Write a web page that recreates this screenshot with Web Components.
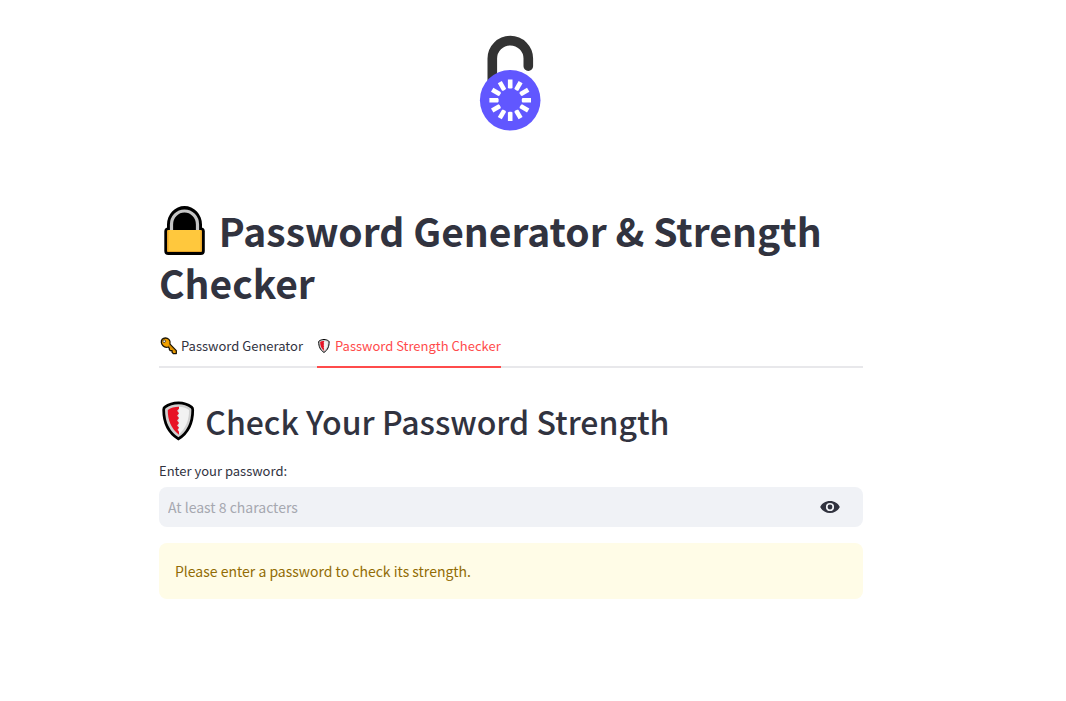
<!DOCTYPE html>
<html lang="en">
<head>
<meta charset="utf-8">
<meta name="viewport" content="width=device-width, initial-scale=1">
<title>Password Generator &amp; Strength Checker</title>
<style>
  body {
    margin: 0;
    background: #fff;
    color: #31333f;
    font-family: "Noto Sans CJK SC", "Noto Sans", sans-serif;
  }
</style>
</head>
<body>
<password-app></password-app>

<script>
const css = String.raw;
function define(name, style, markup, setup) {
  const template = document.createElement('template');
  template.innerHTML = `<style>*{box-sizing:border-box}${style}</style>${markup}`;
  customElements.define(name, class extends HTMLElement {
    constructor() {
      super();
      this.attachShadow({ mode: 'open' }).append(template.content.cloneNode(true));
    }
    connectedCallback() { if (setup) setup(this, this.shadowRoot); }
  });
}

define('logo-mark', css`
  :host { display: flex; justify-content: center; }
  svg { display: block; width: 64px; height: 96px; }
`, `
  <svg viewBox="0 0 64 96" role="img" aria-label="Open padlock">
    <path d="M14.3 50V23.600a18 18 0 0 1 36 0v7.600" fill="none" stroke="#333" stroke-width="9.6" stroke-linecap="round"/>
    <circle cx="32.2" cy="65.2" r="30.3" fill="#6157ff"/>
    <g id="ticks" fill="#fff" transform="translate(32.2 65.2)"></g>
  </svg>
`, (host, root) => {
  const ticks = root.getElementById('ticks');
  if (ticks.childElementCount) return;
  for (let i = 0; i < 12; i++) {
    const p = document.createElementNS('http://www.w3.org/2000/svg', 'path');
    p.setAttribute('d', 'M-2.3-20.8H2.3V-12.3L1.2-11.6H-1.2L-2.3-12.3Z');
    p.setAttribute('transform', `rotate(${i * 30})`);
    ticks.append(p);
  }
});

const iconBox = css`
  :host { display: inline-block; }
  svg { display: block; width: 100%; height: 100%; }
`;

define('icon-lock', iconBox, `
  <svg viewBox="0 -1 51 52" role="img" aria-label="Locked">
    <path d="M8 25V19.500a17.500 18.500 0 0 1 35 0V25Z" fill="#000"/>
    <rect x="5.300" y="22.500" width="40.500" height="27.500" rx="4" fill="#000"/>
    <path d="M12.500 27V19.500a13 13.500 0 0 1 26 0V27" fill="none" stroke="#c6c6c6" stroke-width="3.200"/>
    <rect x="8" y="25" width="35" height="22" rx="1" fill="#e8a52a"/>
    <rect x="9.500" y="25" width="32" height="21" fill="#ffc83d"/>
  </svg>
`);

define('icon-shield', iconBox, `
  <svg viewBox="0 0 40 42" role="img" aria-label="Shield">
    <path d="M20 2.400C15.500 2.400 10 3.800 6 6.800 5 7.600 4.800 8.300 4.800 9.500 4.800 22 9 32.500 19.900 39.400 31 32.500 34.600 22 34.600 9.500c0-1.200-.2-1.900-1.200-2.700C29.500 3.800 24.500 2.400 20 2.400Z" fill="#d0d0d0" stroke="#000" stroke-width="2.800"/>
    <path d="M20 6.500c4 0 7.500 1 10.800 3.200C31 19.500 27.500 29 20 35Z" fill="#f2f2f2"/>
    <path d="M20.500 6.500C16 6.500 12 7.500 9 9.700 8.800 19.500 12.500 29 20.500 35V32l-1.500-2 1.500-2-2-2.500 2-2.500-2-2.500 2-2.500-2-2.500 2-2.500-2-2.500 2-2Z" fill="#e81224"/>
  </svg>
`);

define('icon-key', iconBox, `
  <svg viewBox="-1 0 18 18" role="img" aria-label="Key">
    <path d="M2.200 2.300C3.800.5 7 .6 8.900 2.400c1.300 1.300 1.600 3 1.100 4.700l6.300 6.500v3h-3l-1.200-1.300v-1.600h-1.700l-1-1.100v-1.300L8.300 10c-1.900.6-4 .2-5.300-1.200C1.200 7 .7 4 2.200 2.300Z" fill="#f2a100" stroke="#1b1405" stroke-width="1.300" stroke-linejoin="round"/>
    <circle cx="4.200" cy="4.200" r="1.300" fill="#fff" stroke="#1b1405" stroke-width=".7"/>
    <path d="m8.500 8 6.800 6.800" stroke="#b87400" stroke-width=".8"/>
  </svg>
`);

define('icon-eye', iconBox, `
  <svg viewBox="0 0 20 14" aria-hidden="true">
    <path fill="currentColor" fill-rule="evenodd" d="M10 1C5.500 1 1.700 3.500.2 7c1.500 3.500 5.300 6 9.800 6s8.300-2.500 9.800-6C18.300 3.500 14.500 1 10 1Zm0 10.100a4.100 4.100 0 1 1 0-8.200 4.100 4.100 0 0 1 0 8.200Zm0-1.700a2.400 2.400 0 1 0 0-4.800 2.400 2.400 0 0 0 0 4.800Z"/>
  </svg>
`);

define('page-title', css`
  :host { display: block; }
  h1 { margin: 0; font-size: 39px; font-weight: 700; line-height: 52px; }
  icon-lock { width: 51px; height: 52px; vertical-align: top; }
`, `<h1><icon-lock></icon-lock> <slot></slot></h1>`);

define('section-heading', css`
  :host { display: block; }
  h2 { margin: 0; font-size: 32px; font-weight: 500; line-height: 42px; }
  icon-shield { width: 39px; height: 42px; vertical-align: top; }
`, `<h2><icon-shield></icon-shield> <slot></slot></h2>`);

define('tab-bar', css`
  :host { display: flex; gap: 14px; box-shadow: inset 0 -2px #e8e8eb; }
`, `<slot></slot>`, host => {
  host.setAttribute('role', 'tablist');
  host.addEventListener('click', e => {
    const tab = e.target.closest('tab-item');
    if (!tab) return;
    for (const t of host.children) t.toggleAttribute('selected', t === tab);
  });
});

define('tab-item', css`
  :host { display: block; }
  button {
    display: flex; align-items: center; gap: 4px;
    height: 42px; padding: 0; border: 0; border-bottom: 2px solid transparent;
    background: none; color: inherit;
    font-family: inherit; font-size: 13px; line-height: 20px; white-space: nowrap; cursor: pointer;
  }
  :host([selected]) button { color: #ff4b4b; border-color: #ff4b4b; }
  ::slotted([slot="icon"]) { height: 18px; width: var(--icon-width, 18px); }
`, `<button type="button" role="tab"><slot name="icon"></slot><span><slot></slot></span></button>`);

define('password-field', css`
  :host { display: block; }
  label { display: block; font-size: 13px; line-height: 20px; margin-bottom: 6px; }
  .box { display: flex; height: 40px; border-radius: 8px; background: #f0f2f6; overflow: hidden; }
  input {
    flex: 1; min-width: 0; border: 0; outline: 0; padding: 0 9px; background: none;
    color: inherit; font-family: inherit; font-size: 14px; line-height: 24px;
  }
  input::placeholder { color: #a6a8b0; opacity: 1; }
  button {
    display: flex; align-items: center; border: 0; padding: 0 23px 0 12px;
    background: none; color: inherit; cursor: pointer;
  }
  icon-eye { width: 20px; height: 14px; }
`, `
  <label for="password">Enter your password:</label>
  <div class="box">
    <input id="password" type="password" placeholder="At least 8 characters" autocomplete="off">
    <button type="button" aria-label="Show password text"><icon-eye></icon-eye></button>
  </div>
`, (host, root) => {
  const input = root.querySelector('input');
  root.querySelector('button').onclick = () => {
    input.type = input.type === 'password' ? 'text' : 'password';
  };
});

define('alert-box', css`
  :host {
    display: block; padding: 16px; border-radius: 8px;
    background: #fffce7; color: #926c05; font-size: 14px; line-height: 24px;
  }
  p { margin: 0; }
`, `<p role="status"><slot></slot></p>`);

define('password-app', css`
  :host { display: block; padding: 35px 60px 96px 16px; }
  main { max-width: 704px; margin: 0 auto; }
  logo-mark { margin-bottom: 73px; padding-right: 2px; }
  page-title { margin-bottom: 18px; }
  tab-bar { margin-bottom: 32px; }
  section-heading { margin-bottom: 19px; }
  password-field { margin-bottom: 16px; }
  .narrow { --icon-width: 14px; }
`, `
  <main>
    <logo-mark></logo-mark>
    <page-title>Password Generator &amp; Strength Checker</page-title>
    <tab-bar>
      <tab-item><icon-key slot="icon"></icon-key>Password Generator</tab-item>
      <tab-item class="narrow" selected><icon-shield slot="icon"></icon-shield>Password Strength Checker</tab-item>
    </tab-bar>
    <section-heading>Check Your Password Strength</section-heading>
    <password-field></password-field>
    <alert-box>Please enter a password to check its strength.</alert-box>
  </main>
`);
</script>
</body>
</html>
